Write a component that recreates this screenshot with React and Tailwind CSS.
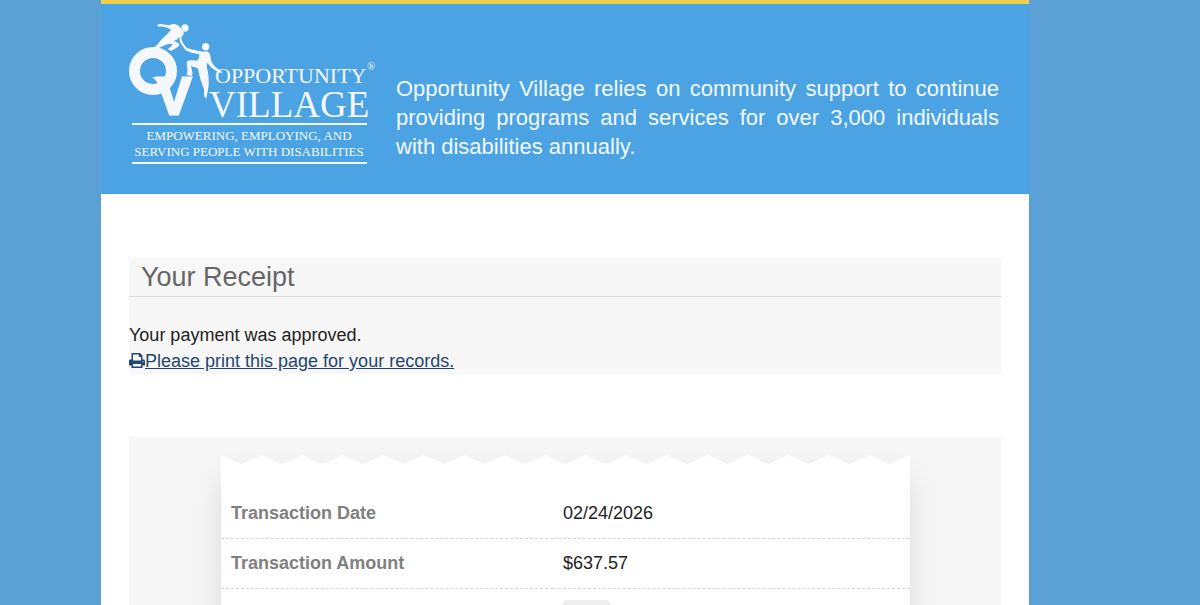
import React from 'react'

const rows = [
  { label: 'Transaction Date', value: '02/24/2026' },
  { label: 'Transaction Amount', value: '$637.57' },
]

const TEETH = 17

// Torn paper edge, one tooth is 40 units wide
function TornEdge() {
  let d = 'M0 0'
  for (let i = 0; i < TEETH; i++) d += `L${i * 40 + 20} 9L${i * 40 + 40} 0`
  d += `V10H0Z`
  return (
    <svg viewBox={`0 0 ${TEETH * 40} 10`} preserveAspectRatio="none" className="relative block w-full h-[10px] -mb-px fill-white" aria-hidden="true">
      <path d={d} />
    </svg>
  )
}

function Logo() {
  return (
    <svg viewBox="129 20 250 146" className="w-[250px] h-[146px] shrink-0 font-['Liberation_Serif',serif]" fill="#f4f8fc" role="img" aria-label="Opportunity Village">
      {/* ring and its tail */}
      <ellipse cx="153" cy="71" rx="18.5" ry="18.5" fill="none" stroke="#f4f8fc" strokeWidth="11" />
      <path d="M152 77H166L168 90L160 88C158 83 156 80 152 77Z" />
      <text x="157" y="114" fontSize="51" fontWeight="700" stroke="#f4f8fc" strokeWidth="3" className="font-['Liberation_Sans',sans-serif]">V</text>

      {/* climbers */}
      <g transform="translate(125 15) scale(0.3333)">
        <circle cx="180" cy="39" r="11" />
        <path d="M97 29C101 25 112 27 132 31C146 24 158 27 166 38L176 52C178 58 172 63 169 66C168 76 174 86 186 99C198 104 210 105 226 109C232 111 238 109 246 109C255 113 257 120 257 129C258 140 264 149 272 157L292 171L289 175L270 166C260 159 253 151 247 143C244 152 246 161 249 172C252 192 252 210 249 225L244 251L237 243L237 223C230 204 223 184 219 161C213 157 207 157 198 153L203 176L199 184L185 179L187 168C189 158 184 150 185 142C188 135 199 135 213 137C220 137 223 129 223 118C205 115 193 112 182 106L165 82L163 66C157 74 151 77 145 78C152 80 164 83 163 91C158 100 147 102 139 108L128 103C133 98 141 93 143 88C130 85 121 89 113 94C99 101 89 101 72 108C86 99 95 92 101 84C107 74 119 65 127 57L138 44C125 36 113 33 99 35Z" />
        <circle cx="242" cy="95" r="11" />
      </g>

      <text x="215" y="83" fontSize="22">OPPORTUNITY</text>
      <text x="367" y="70" fontSize="11">®</text>
      <text x="209" y="117" fontSize="37">VILLAGE</text>
      <path d="M132 123H367V125H132ZM132 162H367V164H132Z" />
      <text x="249" y="140" fontSize="13" textAnchor="middle">EMPOWERING, EMPLOYING, AND</text>
      <text x="249" y="156" fontSize="13" textAnchor="middle">SERVING PEOPLE WITH DISABILITIES</text>
    </svg>
  )
}

function PrintIcon() {
  return (
    <svg viewBox="0 0 16 16" className="inline-block w-4 h-4 -mt-0.5" fill="currentColor" aria-hidden="true">
      <path fillRule="evenodd" d="M2.500 0H11L13.500 2.500V6.500H14.500C15.500 6.500 16 7.200 16 8V12.500H13.500V15H2.500V12.500H0V8C0 7.200.5 6.500 1.500 6.500H2.500ZM4 1.500V7.500H12V4H9.800V1.500ZM4 11V13.500H12V11ZM14.400 8.200H13.400V9.200H14.400Z" />
    </svg>
  )
}

export default function App() {
  return (
    <div className="h-screen overflow-hidden bg-[#5ba1d5] pl-[101px] pr-[171px] font-['Liberation_Sans',Arial,sans-serif] text-lg text-[#222222]">
      <div className="min-h-full bg-white">
        <header className="flex items-start gap-[17px] h-[194px] border-t-4 border-[#f0d04a] bg-[#4ca3e3] pt-4 pl-7 pr-[30px]">
          <Logo />
          <p className="flex-1 mt-[54px] text-[22px] leading-[29px] text-justify text-[#f2f9ff]">
            Opportunity Village relies on community support to continue providing programs and services for over 3,000 individuals with disabilities annually.
          </p>
        </header>

        <main className="px-7">
          {/* Receipt status */}
          <section className="mt-16 bg-[#f7f7f7]">
            <h1 className="px-3 h-[39px] border-b border-[#dddddd] text-[27px] leading-[38px] text-[#666666]">Your Receipt</h1>
            <div className="pt-[25px] leading-[26px]">
              <p>Your payment was approved.</p>
              <a href="#print" className="block text-[#23466e]">
                <PrintIcon /><span className="underline">Please print this page for your records.</span>
              </a>
            </div>
          </section>

          {/* Transaction details */}
          <section className="mt-[63px] bg-[#f7f7f7] pt-[18px] pl-[92px] pr-[91px]">
            <TornEdge />
            <div className="min-h-[400px] bg-white pt-6 shadow-[0_12px_30px_rgba(0,0,0,0.12)]">
              <table className="w-full table-fixed border-collapse text-left">
                <colgroup>
                  <col className="w-[332px]" />
                  <col />
                </colgroup>
                <tbody>
                  {rows.map(row => (
                    <tr key={row.label} className="h-[50px] border-b border-dashed border-[#d4d4d4]">
                      <th scope="row" className="px-[10px] font-bold text-[#808080]">{row.label}</th>
                      <td className="px-[10px]">{row.value}</td>
                    </tr>
                  ))}
                  <tr className="h-[50px]">
                    <td />
                    <td className="px-[10px]">
                      <span className="block w-[47px] h-[26px] rounded bg-[#eeeeee]" />
                    </td>
                  </tr>
                </tbody>
              </table>
            </div>
          </section>
        </main>
      </div>
    </div>
  )
}
